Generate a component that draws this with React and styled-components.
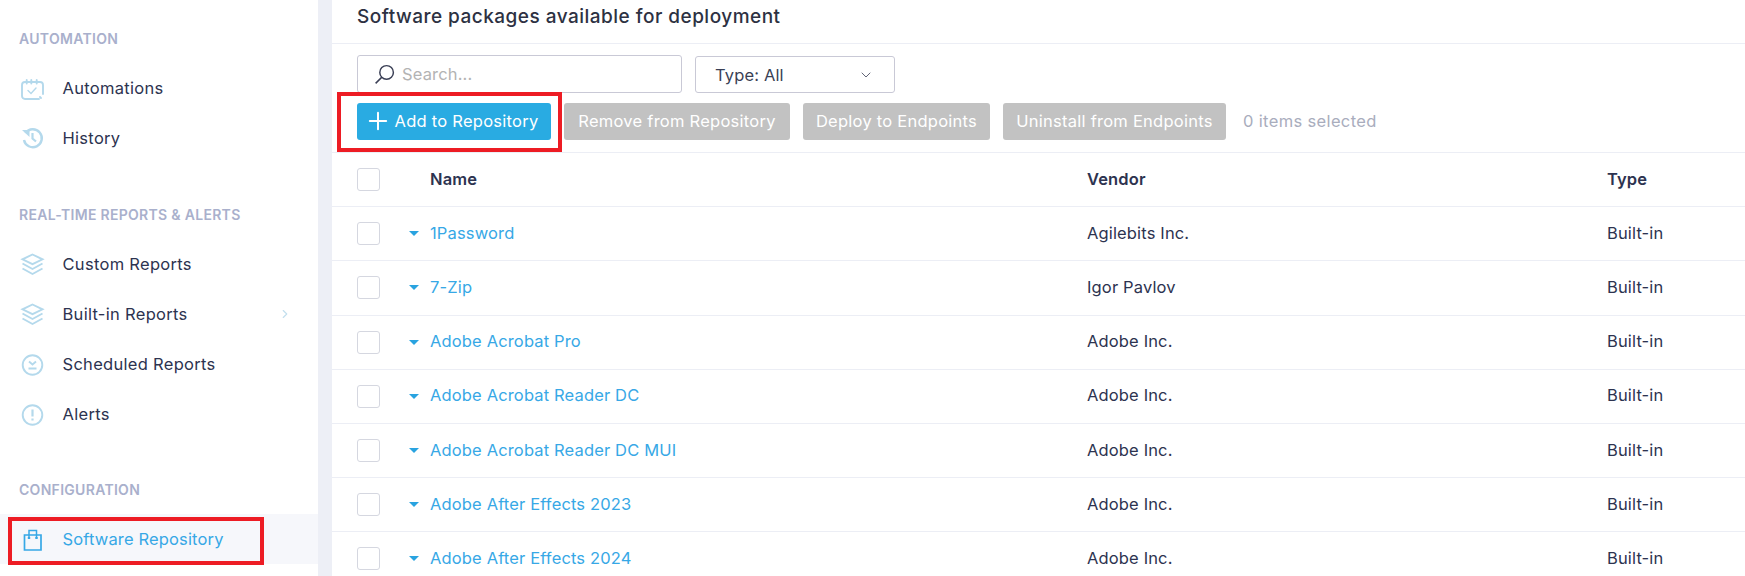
import React from "react";
import styled, { createGlobalStyle } from "styled-components";
import { ChevronRight, ChevronDown, Plus } from "lucide-react";

const GlobalStyle = createGlobalStyle`
  html, body {
    margin: 0;
    background: #fff;
  }
  body {
    font-family: Inter, "Open Sans", Arial, sans-serif;
    color: #2d3350;
    letter-spacing: 0.15px;
  }
`;

const Page = styled.div`
  display: grid;
  grid-template-columns: 318px 14px 1fr;
  width: 1745px;
  height: 576px;
  overflow: hidden;
`;

const Sidebar = styled.aside`
  padding-top: 28px;
`;

const Gutter = styled.div`
  background: #edeff6;
`;

const SectionLabel = styled.div`
  height: 20px;
  line-height: 21px;
  padding-left: 19px;
  margin-top: ${p => p.$gap}px;
  margin-bottom: 15px;
  font-size: 14px;
  font-weight: 600;
  letter-spacing: 0.3px;
  color: #a9b0cc;
`;

const NavItem = styled.div`
  position: relative;
  display: flex;
  align-items: center;
  height: 50px;
  padding-left: 21px;
  font-size: 16.5px;
  letter-spacing: ${p => (p.$active ? "0.15px" : "0.3px")};
  color: ${p => (p.$active ? "#37a8e6" : "#2d3350")};
  background: ${p => (p.$active ? "#f6f7fb" : "transparent")};
  svg.nav-icon {
    width: 22px;
    height: 22px;
    margin-right: 19.5px;
    flex: none;
    overflow: visible;
    color: ${p => (p.$active ? "#37a8e6" : "#b4d9ec")};
  }
`;

const NavChevron = styled(ChevronRight)`
  position: absolute;
  left: 278px;
  top: 18px;
  color: #c3dfee;
`;

const Callout = styled.div`
  position: absolute;
  box-sizing: border-box;
  border: 4.5px solid #ed1c24;
  pointer-events: none;
`;

const SideCallout = styled(Callout)`
  left: 8px;
  top: 3px;
  width: 256px;
  height: 48px;
`;

const Main = styled.main`
  min-width: 0;
`;

const Title = styled.div`
  height: 43px;
  padding: 0 0 0 25px;
  font-size: 19px;
  line-height: 33px;
  font-weight: 500;
  letter-spacing: 0.48px;
  color: #2d3142;
  border-bottom: 1px solid #eceef5;
`;

const FilterBar = styled.div`
  display: flex;
  align-items: flex-end;
  gap: 13px;
  padding: 11px 0 0 25px;
`;

const SearchBox = styled.div`
  box-sizing: border-box;
  display: flex;
  align-items: center;
  width: 325px;
  height: 38px;
  padding-left: 15px;
  border: 1px solid #c9c9d6;
  border-radius: 3px;
  font-size: 16.5px;
  color: #b3b3b3;
  svg {
    margin-right: 6px;
  }
`;

const SelectBox = styled.div`
  box-sizing: border-box;
  display: flex;
  align-items: center;
  justify-content: space-between;
  width: 200px;
  height: 37px;
  padding: 0 20px 0 19px;
  border: 1px solid #c9c9d6;
  border-radius: 3px;
  font-size: 16.5px;
  color: #3a3f55;
`;

const ActionBar = styled.div`
  display: flex;
  align-items: center;
  gap: 13px;
  height: 60px;
  padding: 0 0 3px 25px;
  box-sizing: border-box;
  border-bottom: 1px solid #eceef5;
`;

const ActionWrap = styled.div`
  position: relative;
`;

const AddCallout = styled(Callout)`
  left: -20px;
  top: -11px;
  width: 225px;
  height: 60px;
`;

const ActionButton = styled.button`
  display: flex;
  align-items: center;
  justify-content: center;
  box-sizing: border-box;
  width: ${p => p.$w}px;
  height: 37px;
  padding: 0;
  border: 0;
  border-radius: 3px;
  font-family: inherit;
  font-size: 16.5px;
  letter-spacing: 0.25px;
  color: #fff;
  background: ${p => (p.$primary ? "#29abe2" : "#c2c2c2")};
  svg {
    margin: 0 3px 0 -6px;
  }
`;

const SelectedCount = styled.span`
  margin-left: 4px;
  font-size: 16.5px;
  letter-spacing: 0.35px;
  color: #a9adbd;
`;

const Row = styled.div`
  display: grid;
  grid-template-columns: 23px 50px 657px 520px 1fr;
  align-items: center;
  box-sizing: border-box;
  height: 54.2px;
  padding-left: 25px;
  border-bottom: 1px solid #eceef5;
  font-size: 16.5px;
`;

const Checkbox = styled.span`
  box-sizing: border-box;
  display: block;
  width: 23px;
  height: 23px;
  border: 1px solid #d5d7e0;
  border-radius: 3px;
`;

const Caret = styled.span`
  justify-self: end;
  width: 0;
  height: 0;
  margin-right: 11px;
  border-left: 5px solid transparent;
  border-right: 5px solid transparent;
  border-top: 5px solid #29a3e0;
`;

const Cell = styled.span`
  margin-bottom: 2px;
`;

const HeadCell = styled(Cell)`
  font-weight: 600;
  color: #2d3350;
`;

const PackageName = styled(Cell)`
  color: #37a8e6;
`;

const CalendarIcon = props => (
  <svg viewBox="0 0 22 22" fill="none" stroke="currentColor" strokeWidth="1.9" strokeLinecap="round" {...props}>
    <path d="M18 22H4a3 3 0 0 1-3-3V8a3 3 0 0 1 3-3h15a3 3 0 0 1 3 3v9" />
    <path d="M5.7 3v3.5M10.3 3v3.5M15.7 3v3.5M19 20l1 1" />
    <path d="M7 13.5l3 3 5-5.5" strokeWidth="1.4" />
  </svg>
);

const HistoryIcon = props => (
  <svg viewBox="0 0 22 22" fill="none" stroke="currentColor" strokeWidth="2.4" {...props}>
    <path d="M4.5 6A9 9 0 1 1 3 13" />
    <path d="M1 3h7.5v7z" fill="currentColor" strokeWidth="0" />
    <path d="M11.5 6v5.5l3.5 3" strokeWidth="2.2" />
  </svg>
);

const LayersIcon = props => (
  <svg viewBox="0 0 22 22" fill="none" stroke="currentColor" strokeWidth="1.9" {...props}>
    <path d="M11.5 1.5l10 4.8-10 4.8-10-4.8z" />
    <path d="M1.5 10.5l10 5.5 10-5.5" />
    <path d="M1.5 15.5l10 5.5 10-5.5" />
  </svg>
);

const ScheduledIcon = props => (
  <svg viewBox="0 0 22 22" fill="none" stroke="currentColor" strokeWidth="1.9" {...props}>
    <circle cx="11.5" cy="12" r="9.8" />
    <path d="M8 8.5l3.5 3 3.5-3M7.5 15.5h8" />
  </svg>
);

const AlertIcon = props => (
  <svg viewBox="0 0 22 22" fill="none" stroke="currentColor" strokeWidth="1.9" {...props}>
    <circle cx="11.5" cy="12" r="9.8" />
    <path d="M11.5 6.5v7M11.5 15.5v2" strokeWidth="2.2" />
  </svg>
);

const BagIcon = props => (
  <svg viewBox="0 0 22 22" fill="none" stroke="currentColor" strokeWidth="1.7" {...props}>
    <path d="M3.5 7h16.5v15H3.5z" />
    <path d="M8 10V2.5h7.5V10" strokeWidth="1.5" />
    <path d="M6.8 10h2.4M14.3 10h2.4" strokeWidth="2.2" />
  </svg>
);

const SearchIcon = () => (
  <svg width="23" height="23" viewBox="0 0 22 22" fill="none" stroke="#3a3f55" strokeWidth="1.4">
    <circle cx="13" cy="9" r="6.5" />
    <path d="M8.5 13.5L2.5 19.5" />
  </svg>
);

const packages = [
  ["1Password", "Agilebits Inc."],
  ["7-Zip", "Igor Pavlov"],
  ["Adobe Acrobat Pro", "Adobe Inc."],
  ["Adobe Acrobat Reader DC", "Adobe Inc."],
  ["Adobe Acrobat Reader DC MUI", "Adobe Inc."],
  ["Adobe After Effects 2023", "Adobe Inc."],
  ["Adobe After Effects 2024", "Adobe Inc."],
];

export default function App() {
  return (
    <Page>
      <GlobalStyle />
      <Sidebar>
        <SectionLabel $gap={0}>AUTOMATION</SectionLabel>
        <NavItem><CalendarIcon className="nav-icon" />Automations</NavItem>
        <NavItem><HistoryIcon className="nav-icon" />History</NavItem>
        <SectionLabel $gap={41}>REAL-TIME REPORTS &amp; ALERTS</SectionLabel>
        <NavItem><LayersIcon className="nav-icon" />Custom Reports</NavItem>
        <NavItem>
          <LayersIcon className="nav-icon" />Built-in Reports
          <NavChevron size={14} />
        </NavItem>
        <NavItem><ScheduledIcon className="nav-icon" />Scheduled Reports</NavItem>
        <NavItem><AlertIcon className="nav-icon" />Alerts</NavItem>
        <SectionLabel $gap={40}>CONFIGURATION</SectionLabel>
        <NavItem $active>
          <BagIcon className="nav-icon" />Software Repository
          <SideCallout />
        </NavItem>
      </Sidebar>
      <Gutter />
      <Main>
        <Title>Software packages available for deployment</Title>
        <FilterBar>
          <SearchBox><SearchIcon />Search...</SearchBox>
          <SelectBox>Type: All<ChevronDown size={16} strokeWidth={1.2} /></SelectBox>
        </FilterBar>
        <ActionBar>
          <ActionWrap>
            <ActionButton $primary $w={194}><Plus size={28} strokeWidth={1.7} />Add to Repository</ActionButton>
            <AddCallout />
          </ActionWrap>
          <ActionButton $w={226}>Remove from Repository</ActionButton>
          <ActionButton $w={187}>Deploy to Endpoints</ActionButton>
          <ActionButton $w={223}>Uninstall from Endpoints</ActionButton>
          <SelectedCount>0 items selected</SelectedCount>
        </ActionBar>
        <Row>
          <Checkbox />
          <span />
          <HeadCell>Name</HeadCell>
          <HeadCell>Vendor</HeadCell>
          <HeadCell>Type</HeadCell>
        </Row>
        {packages.map(([name, vendor]) => (
          <Row key={name}>
            <Checkbox />
            <Caret />
            <PackageName>{name}</PackageName>
            <Cell>{vendor}</Cell>
            <Cell>Built-in</Cell>
          </Row>
        ))}
      </Main>
    </Page>
  );
}
